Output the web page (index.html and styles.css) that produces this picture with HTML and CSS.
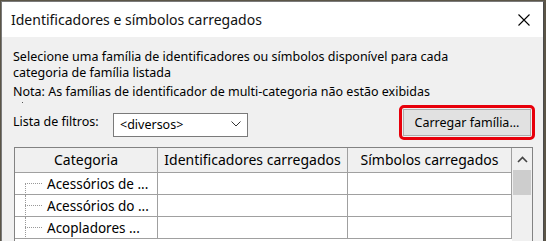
FILE: index.html
```html
<!DOCTYPE html>
<html lang="pt">
<head>
<meta charset="utf-8">
<link rel="stylesheet" href="styles.css">
</head>
<body>
<div class="dialog">
  <div class="titlebar">
    <span class="title">Identificadores e símbolos carregados</span>
    <svg class="close" width="12" height="12" viewBox="0 0 12 12"><path d="M0.5 0.5 L11.5 11.5 M11.5 0.5 L0.5 11.5" stroke="#000" stroke-width="1.1" fill="none"/></svg>
  </div>
  <div class="content">
    <p class="intro">Selecione uma família de identificadores ou símbolos disponível para cada</p>
    <p class="intro">categoria de família listada</p>
    <p class="note">Nota: As famílias de identificador de multi-categoria não estão exibidas</p>
    <span class="dot"></span>
    <div class="filter-row">
      <span class="label">Lista de filtros:</span>
      <div class="select">
        <span>&lt;diversos&gt;</span>
        <svg width="10" height="6" viewBox="0 0 10 6"><path d="M0.5 0.5 L5 5 L9.5 0.5" stroke="#333" stroke-width="1" fill="none"/></svg>
      </div>
      <div class="highlight">
        <div class="button">Carregar família...</div>
      </div>
    </div>
    <div class="grid">
      <div class="th">Categoria</div>
      <div class="th">Identificadores carregados</div>
      <div class="th">Símbolos carregados</div>
      <div class="scroll">
        <div class="arrow"><svg width="11" height="7" viewBox="0 0 11 7"><path d="M1 6 L5.5 1.5 L10 6" stroke="#444" stroke-width="1.6" fill="none"/></svg></div>
        <div class="thumb"></div>
      </div>
      <div class="td cat first"><span class="tree"></span>Acessórios de ...</div>
      <div class="td"></div>
      <div class="td"></div>
      <div class="td cat"><span class="tree"></span>Acessórios do ...</div>
      <div class="td"></div>
      <div class="td"></div>
      <div class="td cat"><span class="tree"></span>Acopladores ...</div>
      <div class="td"></div>
      <div class="td"></div>
    </div>
  </div>
</div>
</body>
</html>
```

FILE: styles.css
```css
html, body {
  margin: 0;
  padding: 0;
}
body {
  background: #5b5547;
  width: 546px;
  height: 241px;
  overflow: hidden;
  font-family: "Noto Sans", "Liberation Sans", sans-serif;
  font-size: 12.5px;
  color: #000;
}
.dialog {
  margin: 1px 0 0 1px;
  width: 541px;
  height: 250px;
  border: 1px solid #7a7a7a;
  border-right-color: #4a4a4a;
  background: #f0f0f0;
  overflow: hidden;
}
.titlebar {
  height: 35px;
  background: #fff;
  display: flex;
  align-items: center;
  justify-content: space-between;
  padding: 0 13px 0 9px;
}
.title {
  font-size: 14px;
  color: #111;
  padding-bottom: 1px;
}
.close {
  margin-top: 1px;
}
.content {
  position: relative;
  padding: 12px 8px 0 11px;
}
p {
  margin: 0;
  line-height: 16px;
}
.note {
  margin-top: 3px;
}
.dot {
  position: absolute;
  left: 20px;
  top: 65px;
  width: 1px;
  height: 1px;
  background: #555;
}
.filter-row {
  display: flex;
  align-items: center;
  margin-top: 5px;
  height: 35px;
}
.label {
  width: 100px;
  margin-top: -3px;
}
.select {
  border: 1px solid #7a7a7a;
  background: #fff;
  display: flex;
  align-items: center;
  justify-content: space-between;
  padding: 0 6px 1px 6px;
  box-sizing: border-box;
  width: 135px;
  height: 24px;
  margin-top: 4px;
}
.highlight {
  margin-left: auto;
  border: 3px solid #e8000b;
  border-radius: 5px;
  padding: 1px;
}
.button {
  width: 128px;
  height: 27px;
  box-sizing: border-box;
  border: 1px solid #adadad;
  background: #e1e1e1;
  display: flex;
  align-items: center;
  justify-content: center;
  padding-bottom: 1px;
}
.grid {
  margin-top: 7px;
  margin-left: 1px;
  width: 519px;
  box-sizing: border-box;
  border: 1px solid #828282;
  display: grid;
  grid-template-columns: 143px 190px 164px 20px;
  grid-template-rows: 25px;
  grid-auto-rows: 22px;
  background: #fff;
}
.th {
  background: #f0f0f0;
  border-right: 1px solid #a0a0a0;
  border-bottom: 1px solid #a0a0a0;
  display: flex;
  align-items: center;
  justify-content: center;
  font-size: 14px;
  padding-bottom: 1px;
}
.td {
  border-right: 1px solid #a0a0a0;
  border-bottom: 1px solid #a0a0a0;
  display: flex;
  align-items: center;
  font-size: 13.5px;
}
.cat {
  position: relative;
}
.tree {
  display: inline-block;
  width: 17px;
  height: 0;
  margin-left: 10px;
  margin-right: 5px;
  border-top: 1px dotted #999;
}
.cat::before {
  content: "";
  position: absolute;
  left: 10px;
  top: 0;
  bottom: -1px;
  border-left: 1px dotted #999;
}
.cat.first::before {
  top: 10px;
}
.scroll {
  grid-row: 1 / span 5;
  grid-column: 4;
  background: #f0f0f0;
  display: flex;
  flex-direction: column;
}
.arrow {
  height: 22px;
  display: flex;
  align-items: center;
  justify-content: center;
}
.thumb {
  margin: 0 1px;
  height: 25px;
  background: #cdcdcd;
}
```
